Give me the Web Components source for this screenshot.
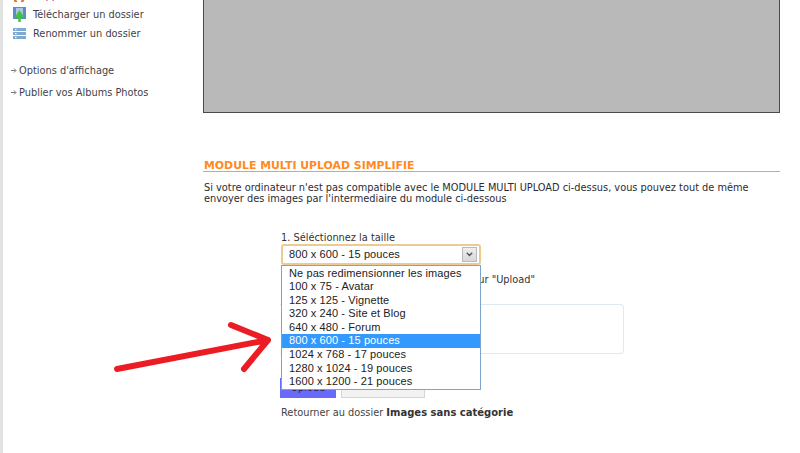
<!DOCTYPE html>
<html lang="fr"><head><meta charset="utf-8"><title>Upload</title>
<style>
html,body{margin:0;padding:0;background:#fff;overflow:hidden}
body{width:800px;height:453px;font:9.8px/11px "DejaVu Sans",Verdana,sans-serif;color:#333}
</style></head><body>
<template id="t-page"><style>
:host{display:grid;height:453px;overflow:hidden;border-left:3px solid #e2e2e2;box-sizing:border-box;grid-template-columns:200px 577px}
</style><slot name="side"></slot><slot name="main"></slot></template>

<template id="t-side"><style>
:host{display:flex;flex-direction:column;color:#444}
.clip{height:2px;overflow:hidden;margin-bottom:3px;padding-left:10px;display:flex;gap:7px;align-items:flex-end;color:#7a3a8a}
svg{flex:none}
span{white-space:nowrap;margin-bottom:1px}
</style><div class="clip"><svg width="13" height="2" viewBox="0 0 13 2"><path d="M2 0l1 2M10 0l-1 2" stroke="#e07a20" stroke-width="2.500" stroke-linecap="round" fill="none"/></svg><span>Supprimer un dossier</span></div><slot></slot></template>

<template id="t-tool"><style>
:host{display:flex;align-items:center;gap:7px;height:19px;padding-left:10px;color:#3f3f4a;white-space:nowrap}
</style><slot name="icon"></slot><slot></slot></template>

<template id="t-opt"><style>
:host{display:flex;align-items:center;gap:2px;padding-left:8px;color:#3f3f4a;height:11px}
</style><svg width="6" height="7" viewBox="0 0 6 7"><path d="M0 3.500h4.500M3 1.500l2 2-2 2" stroke="#555" stroke-width=".8" fill="none"/></svg><slot></slot></template>

<template id="t-main"><style>
:host{display:flex;flex-direction:column;position:relative}
.shot{height:113px;box-sizing:border-box;background:#b9b9b9;border:1px solid #4a4a4a;border-top:0}
h2{margin:46px 0 0;padding:0 0 0 1px;font:bold 10.900px/13px "DejaVu Sans",Verdana,sans-serif;color:#ff8a1f;border-bottom:1px solid #f7a04b;height:12px}
p{margin:10px 0 0 1px;line-height:11px;color:#2b2b33}
</style><div class="shot"></div><h2>MODULE MULTI UPLOAD SIMPLIFIE</h2><p>Si votre ordinateur n'est pas compatible avec le MODULE MULTI UPLOAD ci-dessus, vous pouvez tout de même<br>envoyer des images par l'intermediaire du module ci-dessous</p><slot></slot></template>

<template id="t-form"><style>
:host{display:flex;flex-direction:column;margin:28px 0 0 77px;width:344px;position:relative}
.label{height:11px;color:#333;padding-left:1px}
.s2{margin-top:9px;height:11px;display:flex;justify-content:space-between;color:#333;width:254px;padding-left:1px}
.box{margin-top:19px;height:50px;box-sizing:border-box;border:1px solid #dfe8f5;border-left:0;border-radius:0 4px 4px 0}
.c{height:11px;margin-top:9px;padding-left:1px}
.btns{display:flex;gap:5px;height:20px;margin-top:4px}
.up{width:56px;background:#6a6afa;color:#223;text-align:center;line-height:20px}
.no{width:82px;background:#f2f2f2;border:1px solid #d5d5d5;border-top:0;height:19px}
.back{margin-top:9px;height:11px;color:#444;padding-left:1px}
b{color:#333;font-size:10px}
</style>
<div class="label">1. Séléctionnez la taille</div>
<slot></slot>
<div class="s2"><span>2</span><span>sur "Upload"</span></div>
<div class="box"></div>
<div class="c">Cliquez</div>
<div class="btns"><div class="up">Upload</div><div class="no"></div></div>
<div class="back">Retourner au dossier <b>Images sans catégorie</b></div>
</template>

<template id="t-select"><style>
:host{display:flex;align-items:center;justify-content:space-between;box-sizing:border-box;width:200px;height:21px;margin:1px 0 0 1px;border:2px solid #ecca92;border-radius:3px;padding:0 2px 0 6px;font:11px/13px "Liberation Sans",Arial,sans-serif;letter-spacing:.1px;color:#222;position:relative;background:#fff}
.btn{width:13px;height:13px;background:linear-gradient(#eee,#d8d8d8);border:1px solid #b9b9b9;display:flex;align-items:center;justify-content:center}
.list{position:absolute;left:-2px;top:19px;width:198px;border:1px solid #7ba4cf;background:#fff;padding-top:.5px}
</style><span>800 x 600 - 15 pouces</span><span class="btn"><svg width="7" height="5" viewBox="0 0 7 5"><path d="M.8.800l2.700 2.700L6.200.800" stroke="#555" stroke-width="1.400" fill="none"/></svg></span><div class="list"><slot></slot></div></template>

<template id="t-option"><style>
:host{display:block;height:13.600px;line-height:13.600px;padding-left:7px;color:#222;white-space:nowrap}
:host([selected]){background:#3399ff;color:#fff}
</style><slot></slot></template>

<x-page>
<x-side slot="side">
<x-tool><svg slot="icon" width="13" height="16" viewBox="0 0 13 16"><rect x="0" y="0" width="13" height="12" fill="#5b8fc4"/><rect x="3" y="1" width="7" height="9" fill="#a9c8e6"/><path d="M6.500 15V8M4 9l2.500-3.500L9 9z" stroke="#45c23a" stroke-width="2.500" fill="#45c23a"/></svg>Télécharger un dossier</x-tool>
<x-tool><svg slot="icon" width="13" height="12" viewBox="0 0 13 12"><path d="M0 1.500h13M0 5.500h13M0 9.500h13" stroke="#7fa9d0" stroke-width="3"/><path d="M2 1.500h1.500M2 5.500h1.500M2 9.500h1.500" stroke="#fff"/></svg>Renommer un dossier</x-tool>
<x-opt style="margin-top:22px">Options d'affichage</x-opt>
<x-opt style="margin-top:11px">Publier vos Albums Photos</x-opt>
</x-side>
<x-main slot="main">
<x-form>
<x-select>
<x-option>Ne pas redimensionner les images</x-option>
<x-option>100 x 75 - Avatar</x-option>
<x-option>125 x 125 - Vignette</x-option>
<x-option>320 x 240 - Site et Blog</x-option>
<x-option>640 x 480 - Forum</x-option>
<x-option selected>800 x 600 - 15 pouces</x-option>
<x-option>1024 x 768 - 17 pouces</x-option>
<x-option>1280 x 1024 - 19 pouces</x-option>
<x-option>1600 x 1200 - 21 pouces</x-option>
</x-select>
</x-form>
</x-main>
</x-page>
<x-arrow></x-arrow>
<script>
function def(name,tid){customElements.define(name,class extends HTMLElement{constructor(){super();this.attachShadow({mode:'open'}).appendChild(document.getElementById(tid).content.cloneNode(true));}});}
[['x-page','t-page'],['x-side','t-side'],['x-tool','t-tool'],['x-opt','t-opt'],['x-main','t-main'],['x-form','t-form'],['x-select','t-select'],['x-option','t-option']].forEach(a=>def(a[0],a[1]));
customElements.define('x-arrow',class extends HTMLElement{constructor(){super();this.attachShadow({mode:'open'}).innerHTML='<style>:host{position:absolute;left:110px;top:318px;width:165px;height:60px;display:block}</style><svg width="165" height="60" viewBox="110 318 165 60"><path d="M117 369L268 340M231 325L268 340L244 369" fill="none" stroke="#ec1c24" stroke-width="6" stroke-linecap="round" stroke-linejoin="round"/></svg>';}});
</script>
</body></html>
